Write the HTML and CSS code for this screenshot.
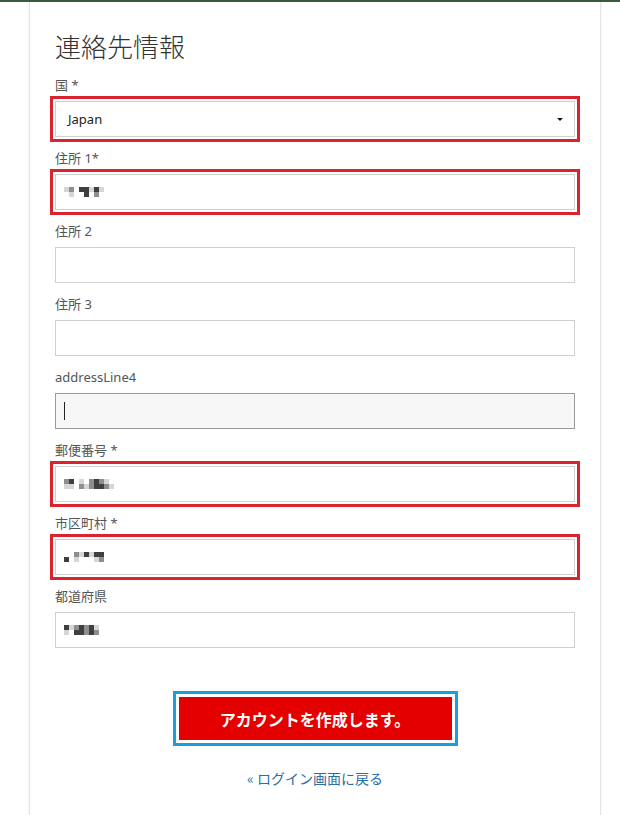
FILE: index.html
```html
<!DOCTYPE html>
<html lang="ja">

<head>
    <meta charset="UTF-8">
    <meta name="viewport" content="width=device-width, initial-scale=1.0">
    <title>連絡先情報</title>
    <link rel="stylesheet" href="styles.css">
</head>

<body>
    <div class="topbar"></div>

    <div class="card">
        <h1 class="title">連絡先情報</h1>

        <div class="group">
            <label class="label">国 *</label>
            <div class="select marked">
                <span class="value">Japan</span>
            </div>
        </div>

        <div class="group">
            <label class="label">住所 1*</label>
            <div class="field marked">
                <span class="mosaic">
                    <i class="b"></i><i class="a"></i>
                    <i class="c"></i><i class="b"></i>
                    <i class="a"></i><i class="a"></i>
                    <i class="d"></i><i class="a"></i>
                    <i class="d"></i><i class="d"></i>
                    <i class="b"></i><i class="a"></i>
                    <i class="d"></i><i class="c"></i>
                    <i class="b"></i><i class="a"></i>
                </span>
            </div>
        </div>

        <div class="group">
            <label class="label">住所 2</label>
            <div class="field"></div>
        </div>

        <div class="group">
            <label class="label">住所 3</label>
            <div class="field"></div>
        </div>

        <div class="group">
            <label class="label">addressLine4</label>
            <div class="field focused"><span class="caret"></span></div>
        </div>

        <div class="group">
            <label class="label">郵便番号 *</label>
            <div class="field marked">
                <span class="mosaic">
                    <i class="c"></i><i class="b"></i>
                    <i class="d"></i><i class="b"></i>
                    <i class="a"></i><i class="a"></i>
                    <i class="b"></i><i class="c"></i>
                    <i class="a"></i><i class="b"></i>
                    <i class="c"></i><i class="c"></i>
                    <i class="d"></i><i class="d"></i>
                    <i class="c"></i><i class="d"></i>
                    <i class="b"></i><i class="c"></i>
                    <i class="a"></i><i class="b"></i>
                </span>
            </div>
        </div>

        <div class="group">
            <label class="label">市区町村 *</label>
            <div class="field marked">
                <span class="mosaic">
                    <i class="a"></i><i class="d"></i>
                    <i class="a"></i><i class="a"></i>
                    <i class="c"></i><i class="b"></i>
                    <i class="b"></i><i class="a"></i>
                    <i class="d"></i><i class="a"></i>
                    <i class="b"></i><i class="a"></i>
                    <i class="d"></i><i class="b"></i>
                    <i class="d"></i><i class="c"></i>
                </span>
            </div>
        </div>

        <div class="group">
            <label class="label">都道府県</label>
            <div class="field">
                <span class="mosaic">
                    <i class="d"></i><i class="b"></i>
                    <i class="b"></i><i class="a"></i>
                    <i class="c"></i><i class="d"></i>
                    <i class="d"></i><i class="d"></i>
                    <i class="c"></i><i class="c"></i>
                    <i class="d"></i><i class="d"></i>
                    <i class="b"></i><i class="c"></i>
                </span>
            </div>
        </div>

        <div class="actions">
            <button class="submit" type="button">アカウントを作成します。</button>
            <a class="back" href="#">« ログイン画面に戻る</a>
        </div>
    </div>
</body>

</html>
```

FILE: styles.css
```css
body {
    margin: 0;
    background: #fff;
    font-family: "Noto Sans", "Noto Sans CJK JP", sans-serif;
    color: #555;
    overflow: hidden;
    height: 100vh;
}

.topbar {
    height: 2px;
    background: #3b5a40;
}

.card {
    box-sizing: border-box;
    height: calc(100vh - 2px);
    margin: 0 19px 0 29px;
    padding: 26px 25px 0 25px;
    border-left: 1px solid #e4e4e4;
    border-right: 1px solid #e4e4e4;
    box-shadow: 0 0 3px rgba(0, 0, 0, 0.08);
}

.title {
    margin: 0 0 12px 0;
    font-family: "Noto Sans CJK JP", sans-serif;
    font-size: 26px;
    font-weight: 300;
    line-height: 36px;
    color: #333;
}

.group {
    margin-bottom: 12px;
}

.label {
    display: block;
    font-family: "Noto Sans", "Noto Sans CJK JP", sans-serif;
    font-size: 13px;
    line-height: 18px;
    margin-bottom: 7px;
    color: #555;
}

.field,
.select {
    position: relative;
    box-sizing: border-box;
    height: 36px;
    border: 1px solid #cfcfcf;
    background: #fff;
    display: flex;
    align-items: center;
    padding: 0 12px;
}

.marked {
    outline: 3px solid #d9232e;
    outline-offset: 2px;
}

.focused {
    background: #f7f7f7;
    border-color: #9a9a9a;
    padding-left: 8px;
}

.caret {
    width: 1px;
    height: 18px;
    background: #222;
}

.select .value {
    font-size: 13px;
    color: #222;
}

/* arrow of the select box */
.select::after {
    content: "";
    position: absolute;
    right: 11px;
    top: 16px;
    border-left: 3px solid transparent;
    border-right: 3px solid transparent;
    border-top: 3px solid #111;
}

/* blurred field values */
.mosaic {
    display: grid;
    grid-auto-flow: column;
    grid-template-rows: 5px 5px;
    grid-auto-columns: 5px;
    margin-left: -4px;
}

.mosaic i.a { background: transparent; }
.mosaic i.b { background: #d6d6d6; }
.mosaic i.c { background: #8e8e8e; }
.mosaic i.d { background: #3f3f3f; }

.actions {
    padding-top: 37px;
    display: flex;
    flex-direction: column;
    align-items: center;
}

.submit {
    width: 273px;
    height: 43px;
    border: none;
    background: #e50000;
    color: #fff;
    font-family: "Noto Sans CJK JP", sans-serif;
    font-size: 16px;
    font-weight: 700;
    outline: 3px solid #1a9fd8;
    outline-offset: 3px;
}

.back {
    margin-top: 28px;
    font-family: "Noto Sans CJK JP", sans-serif;
    font-size: 14px;
    line-height: 20px;
    color: #2a6ea6;
    text-decoration: none;
}
```
